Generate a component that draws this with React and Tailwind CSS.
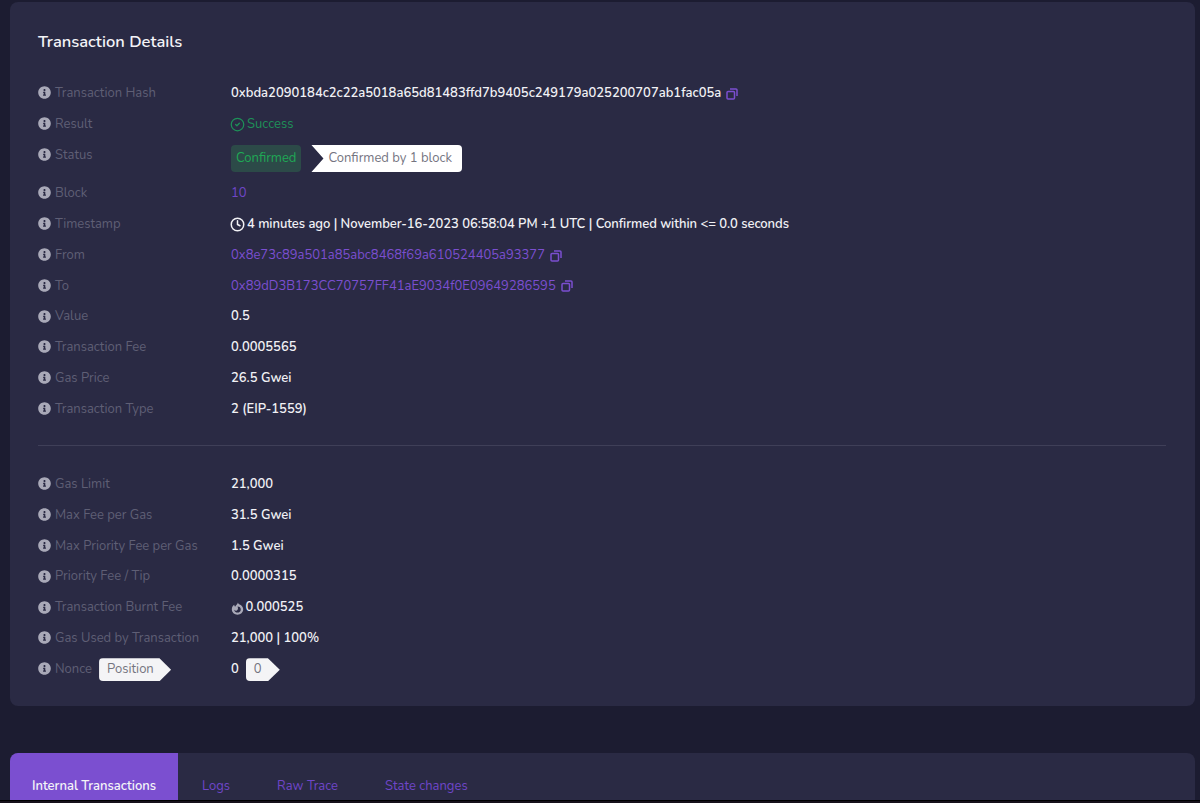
import React from 'react';
import { CircleCheck, Clock } from 'lucide-react';
import { FaInfoCircle } from 'react-icons/fa';

const Flame = () => (
  <svg viewBox="0 0 16 16" className="w-[13px] h-[13px] shrink-0">
    <path
      d="M8.600 0.500c.2 1.300 1 2 2.200 2.600 2.400 1.200 4.200 3.300 4.200 5.900 0 3.900-3.100 6.700-7 6.700s-7-2.800-7-6.700c0-2.500 1.300-4.300 3-5.500 0 1 .3 1.700 1 2.200C6 4 7.900 2.600 8.600 0.500z"
      fill="#a9a9b8"
    />
    <path d="M8 5.500a4 4 0 0 1 4 4c0 2-1.800 3.500-4 3.500s-4-1.500-4-3.500c.9 1 2 1.500 3.200.9C8.800 9.600 9 7.400 8 5.500z" fill="#2a2a44" />
  </svg>
);

const CopyIcon = () => (
  <svg viewBox="0 0 12 12" className="w-[12px] h-[12px] ml-[5px] shrink-0" fill="none" stroke="#7b4fd0" strokeWidth="1.500">
    <rect x="1" y="3.500" width="7.500" height="7.500" rx="1" />
    <path d="M4 1h6a1 1 0 0 1 1 1v6" />
  </svg>
);

const Info = () => <FaInfoCircle className="w-[13px] h-[13px] mb-[2px] text-[#a9a9b8] shrink-0" />;

const Row = ({ label, tag, children }) => (
  <div className="flex items-center h-[30.8px]">
    <div className="w-[193px] shrink-0 flex items-center gap-[4px] text-[#5f5f75]">
      <Info />
      <span>{label}</span>
      {tag}
    </div>
    <div className="flex items-center min-w-0 text-[#f1f1f5] font-semibold">{children}</div>
  </div>
);

const App = () => {
  return (
    <div className="h-[803px] overflow-hidden bg-[#1c1c31] flex flex-col text-[13px] font-['Nunito','Lato','Noto_Sans',sans-serif]">
      {/* Details card */}
      <div className="mt-[2px] ml-[10px] mr-[5px] h-[704px] shrink-0 bg-[#2a2a44] rounded-lg pl-[28px] pr-[29px] pt-[29px]">
        <h1 className="text-[16.5px] leading-[22px] font-semibold text-[#f4f4f8] mb-[25.300px]">Transaction Details</h1>

        <Row label="Transaction Hash">
          <span>0xbda2090184c2c22a5018a65d81483ffd7b9405c249179a025200707ab1fac05a</span>
          <CopyIcon />
        </Row>
        <Row label="Result">
          <span className="flex items-center gap-[2px] text-[#1e9058] font-normal">
            <CircleCheck className="w-[15px] h-[15px] -ml-[1px]" strokeWidth={2} />
            Success
          </span>
        </Row>
        <div className="flex h-[38.700px] pt-[5.100px]">
          <div className="w-[193px] shrink-0 flex items-center h-[22px] gap-[4px] text-[#5f5f75]">
            <Info />
            <span>Status</span>
          </div>
          <div className="flex items-start gap-[10px]">
            <span className="h-[27px] px-[5px] flex items-center rounded bg-[#2c4a48] text-[#1fa855]">Confirmed</span>
            <span className="h-[27px] w-[151px] pl-[17px] flex items-center bg-white rounded-r text-[#74747f] [clip-path:polygon(0_0,100%_0,100%_100%,0_100%,12px_50%)]">
              Confirmed by 1 block
            </span>
          </div>
        </div>
        <Row label="Block">
          <span className="text-[#6f46c8] font-normal">10</span>
        </Row>
        <Row label="Timestamp">
          <span className="flex items-center gap-[2px] tracking-[-0.05px]">
            <Clock className="w-[15px] h-[15px] -ml-[1px]" strokeWidth={2.4} />
            4 minutes ago | November-16-2023 06:58:04 PM +1 UTC | Confirmed within &lt;= 0.0 seconds
          </span>
        </Row>
        <Row label="From">
          <span className="text-[#7b4fd0] font-normal">0x8e73c89a501a85abc8468f69a610524405a93377</span>
          <CopyIcon />
        </Row>
        <Row label="To">
          <span className="text-[#7b4fd0] font-normal">0x89dD3B173CC70757FF41aE9034f0E09649286595</span>
          <CopyIcon />
        </Row>
        <Row label="Value">0.5</Row>
        <Row label="Transaction Fee">0.0005565</Row>
        <Row label="Gas Price">26.5 Gwei</Row>
        <Row label="Transaction Type">2 (EIP-1559)</Row>

        <hr className="border-0 h-px bg-[#3f3f58] mt-[20px] mb-[23.500px]" />

        <Row label="Gas Limit">21,000</Row>
        <Row label="Max Fee per Gas">31.5 Gwei</Row>
        <Row label="Max Priority Fee per Gas">1.5 Gwei</Row>
        <Row label="Priority Fee / Tip">0.0000315</Row>
        <Row label="Transaction Burnt Fee">
          <span className="flex items-center gap-[1.500px]">
            <Flame />
            0.000525
          </span>
        </Row>
        <Row label="Gas Used by Transaction">21,000 | 100%</Row>
        <Row
          label="Nonce"
          tag={
            <span className="ml-[3px] h-[23px] w-[72px] pl-[8px] flex items-center rounded-l bg-[#f4f4f6] text-[#74747f] [clip-path:polygon(0_0,84%_0,100%_50%,84%_100%,0_100%)]">
              Position
            </span>
          }
        >
          <span>0</span>
          <span className="ml-[7px] h-[23px] w-[34px] pl-[8px] flex items-center rounded-l bg-[#f4f4f6] text-[#74747f] font-normal [clip-path:polygon(0_0,65%_0,100%_50%,65%_100%,0_100%)]">
            0
          </span>
        </Row>
      </div>

      {/* Tabs */}
      <div className="mt-[47px] ml-[10px] mr-[5px] h-[47px] shrink-0 bg-[#2a2a44] rounded-t-lg flex items-stretch text-[#6f46c8]">
        <div className="w-[168px] flex items-end justify-center pb-[4px] bg-[#7b4fd0] rounded-tl-lg text-[#f4f4f8] font-semibold">
          Internal Transactions
        </div>
        <div className="flex items-end pb-[4px] pl-[24px] gap-[47px]">
          <span>Logs</span>
          <span>Raw Trace</span>
          <span>State changes</span>
        </div>
      </div>
      <div className="flex-1 bg-[#16101a] border-t border-black" />
    </div>
  );
};

export default App;
